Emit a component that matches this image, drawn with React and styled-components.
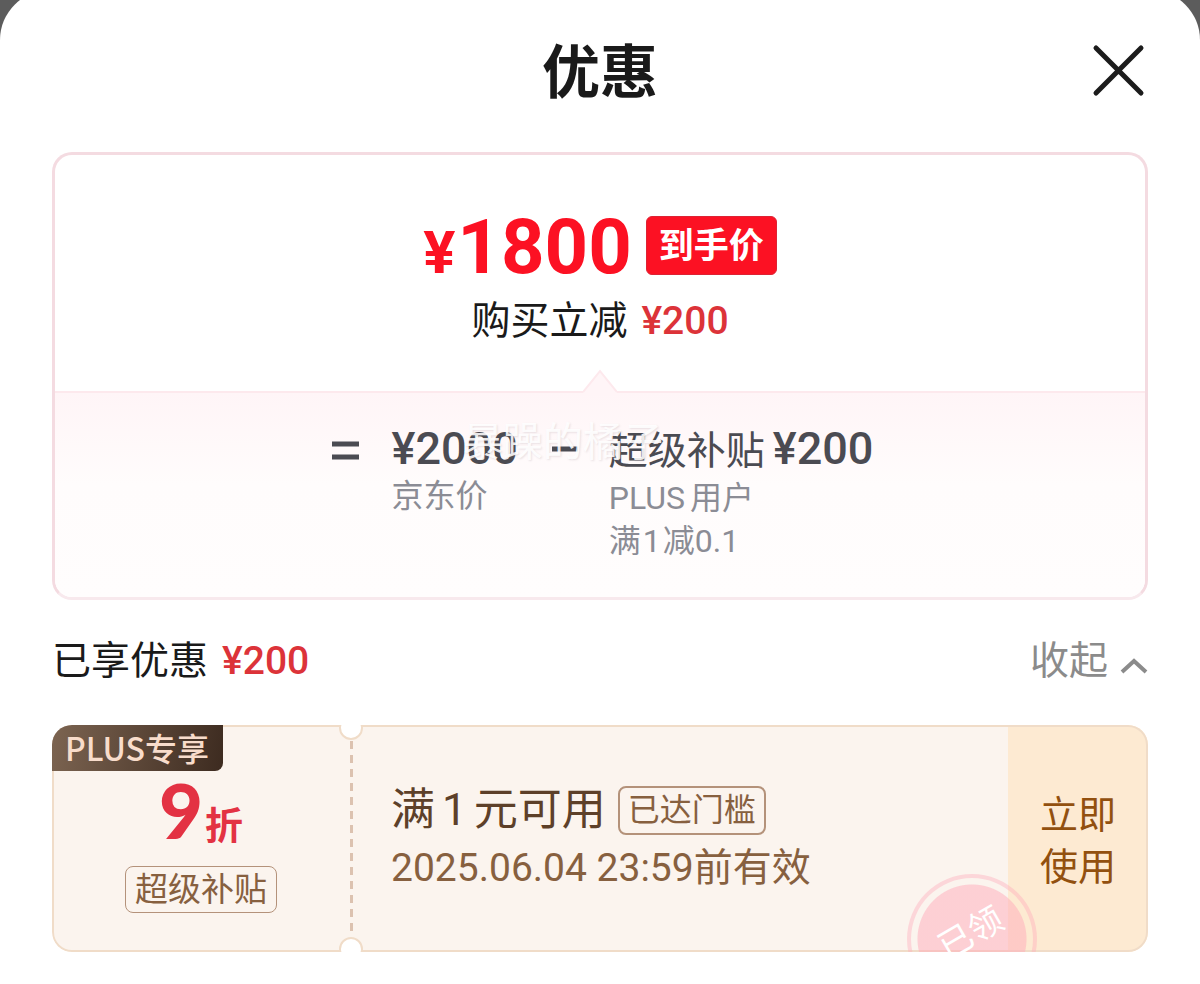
import React from 'react';
import styled, { createGlobalStyle } from 'styled-components';

const GlobalStyle = createGlobalStyle`
    * {
        box-sizing: border-box;
    }

    body {
        margin: 0;
        background: #5c5c5c;
        font-family: Roboto, "Noto Sans CJK SC", sans-serif;
        color: #1a1a1a;
    }

    h1, h2, p {
        margin: 0;
        font-weight: 400;
    }

    button {
        border: none;
        padding: 0;
        background: none;
        font-family: inherit;
        cursor: pointer;
    }
`

// Sheet

const Sheet = styled.main`
    min-height: calc(100vh + 10px);
    margin-top: -10px;
    padding: 10px 52px 32px;
    border-radius: 50px 50px 0 0;
    background: white;
    overflow: hidden;
`

const Header = styled.header`
    display: grid;
    grid-template-columns: 1fr auto 1fr;
    align-items: center;
    padding: 30px 0 38px;
`

const Title = styled.h1`
    grid-column: 2;
    padding-top: 2px;
    font-size: 58px;
    line-height: 82px;

    && {
        font-weight: 700;
    }
`

const CloseButton = styled.button`
    justify-self: end;
    height: 56px;

    svg {
        display: block;
    }
`

const Money = styled.span`
    color: ${props => props.color || '#dc3339'};
    font-size: ${props => props.size || 39}px;
    font-weight: ${props => props.weight || 500};
`

// Price Card

const Card = styled.section`
    border: 3px solid #f4dbe1;
    border-bottom-color: #f8e9ed;
    border-radius: 20px;
    overflow: hidden;
`

const CardTop = styled.div`
    display: flex;
    flex-direction: column;
    align-items: center;
    gap: 18px;
    padding: 60px 0 41px;
`

const PriceRow = styled.div`
    display: flex;
    align-items: center;
    gap: 14px;
    line-height: 64px;
`

const FinalPrice = styled.strong`
    height: 60px;
    color: #fc1123;
    font-size: 76px;
    font-weight: 700;

    small {
        margin-right: 2px;
        font-size: 60px;
    }
`

const PriceTag = styled.span`
    padding: 2px 12px 0;
    border: 1px solid #dd2334;
    border-radius: 6px;
    background: #fc1123;
    color: white;
    font-size: 35px;
    font-weight: 700;
    line-height: 55px;
`

const SaveRow = styled.p`
    display: flex;
    align-items: baseline;
    gap: 14px;
    font-size: 39px;
    line-height: 57px;
`

const CardBottom = styled.div`
    position: relative;
    display: grid;
    grid-template-columns: auto auto auto auto;
    justify-content: center;
    align-items: start;
    padding: 30px 0 34px 5px;
    border-top: 2px solid #fde9ed;
    background: linear-gradient(#fff5f7, #fffcfc 45%, #fffdfd);
    color: #4b4b52;
`

const Pointer = styled.svg`
    position: absolute;
    top: -24px;
    left: 50%;
    margin-left: -17px;
`

const Sign = styled.span`
    width: ${props => props.width}px;
    padding-top: 12px;

    svg {
        display: block;
    }
`

const Part = styled.div`
    margin-right: ${props => props.space || 0}px;
`

const PartValue = styled.p`
    display: flex;
    align-items: baseline;
    gap: 8px;
    font-size: 39px;
    line-height: 52px;
`

const PartNote = styled.p`
    display: flex;
    align-items: baseline;
    gap: ${props => props.gap || 0}px;
    color: #8b8c95;
    font-size: 32px;
    line-height: 43px;
`

const Watermark = styled.span`
    position: absolute;
    top: 24px;
    left: 50%;
    margin-left: -137px;
    color: rgba(255, 255, 255, 0.9);
    font-size: 40px;
    line-height: 52px;
    text-shadow: 1px 1px 2px rgba(120, 100, 110, 0.16);
    pointer-events: none;
`

// Saved Row

const SavedRow = styled.div`
    display: flex;
    justify-content: space-between;
    align-items: center;
    padding: 31px 0 34px;
`

const SavedTitle = styled.h2`
    display: flex;
    align-items: baseline;
    gap: 14px;
    font-size: 39px;
    line-height: 60px;
`

const FoldButton = styled.button`
    display: flex;
    align-items: center;
    gap: 12px;
    color: #8b8b8b;
    font-size: 39px;
    line-height: 60px;

    svg {
        margin-top: 10px;
    }
`

// Coupon

const Coupon = styled.section`
    position: relative;
    display: flex;
    min-height: 227px;
    border-radius: 20px;
    background: #fbf4ee;
    overflow: hidden;

    &::after {
        content: '';
        position: absolute;
        inset: 0;
        border: 2px solid #f0dcc8;
        border-radius: 20px;
        pointer-events: none;
    }
`

const PlusLabel = styled.span`
    position: absolute;
    z-index: 1;
    top: 0;
    left: 0;
    padding: 0 14px 2px 13px;
    border-bottom-right-radius: 8px;
    background: linear-gradient(100deg, #7c6451, #3d2b20);
    color: #f8dccb;
    font-family: "Noto Sans CJK SC", sans-serif;
    font-size: 32px;
    font-weight: 500;
    line-height: 44px;
`

const Discount = styled.div`
    display: flex;
    flex-direction: column;
    align-items: center;
    width: 298px;
    padding-top: 49px;
`

const Rate = styled.p`
    height: 92px;
    color: #e33243;
    font-size: 38px;
    line-height: 72px;

    && {
        font-weight: 700;
    }

    b {
        margin-right: 2px;
        font-family: Lato, sans-serif;
        font-size: 76px;
        font-weight: 900;
    }
`

const Tag = styled.span`
    padding: 0 ${props => props.pad}px;
    border: ${props => props.thick || 1}px solid #b4927a;
    border-radius: 8px;
    color: #87603f;
    font-size: ${props => props.size}px;
    line-height: 45px;
`

const Divider = styled.div`
    width: 3px;
    margin: 16px 0;
    background: repeating-linear-gradient(#dcc2b0 0 8px, transparent 8px 14px);
`

const Notch = styled.i`
    position: absolute;
    z-index: 1;
    left: 287px;
    ${props => props.side}: -9px;
    width: 24px;
    height: 24px;
    border: 2px solid #f0dcc8;
    border-radius: 50%;
    background: white;
`

const Details = styled.div`
    flex: 1;
    padding: 56px 0 0 38px;
`

const Condition = styled.div`
    display: flex;
    align-items: center;
    gap: 12px;
    color: #5d4029;
    font-size: 44px;
    line-height: 58px;
`

const Count = styled.span`
    margin: 0 7px;
`

const Expiry = styled.p`
    color: #87603f;
    font-size: 39px;
    line-height: 58px;
`

const UseButton = styled.button`
    width: 140px;
    padding-top: 4px;
    background: #fdead2;
    color: #92500f;
    font-size: 38px;
    line-height: 52px;

    span {
        display: block;
    }
`

const Stamp = styled.span`
    position: absolute;
    z-index: 1;
    right: 111px;
    bottom: -52px;
    display: grid;
    place-items: center;
    width: 130px;
    height: 130px;
    border: 4px solid rgba(255, 170, 185, 0.4);
    border-radius: 50%;
    background: radial-gradient(circle, rgba(255, 170, 185, 0.5) 54px, transparent 55px);
    color: white;
    font-size: 34px;
    line-height: 40px;
    pointer-events: none;

    span {
        padding: 0 0 12px 4px;
        transform: rotate(-30deg);
    }
`

const App = () => {
    return (
        <>
            <GlobalStyle />
            <Sheet>
                <Header>
                    <Title>优惠</Title>
                    <CloseButton aria-label="关闭">
                        <svg width="58" height="56" viewBox="0 0 58 56" fill="none" stroke="#1c1c1c" strokeWidth="5" strokeLinecap="round">
                            <path d="M6 4L51 49M51 4L6 49" />
                        </svg>
                    </CloseButton>
                </Header>

                <Card>
                    <CardTop>
                        <PriceRow>
                            <FinalPrice><small>¥</small>1800</FinalPrice>
                            <PriceTag>到手价</PriceTag>
                        </PriceRow>
                        <SaveRow>购买立减 <Money>¥200</Money></SaveRow>
                    </CardTop>
                    <CardBottom>
                        <Pointer width="34" height="26" viewBox="0 0 34 26">
                            <path d="M0 26V23L17 2L34 23V26Z" fill="#fff5f7" />
                            <path d="M0 23L17 2L34 23" fill="none" stroke="#fde9ed" strokeWidth="2" />
                        </Pointer>
                        <Sign width={60}>
                            <svg width="27" height="34" viewBox="0 0 27 34" stroke="#4b4b52" strokeWidth="5">
                                <path d="M0 9H27M0 22H27" />
                            </svg>
                        </Sign>
                        <Part space={34}>
                            <PartValue><Money size={45} color="#4b4b52">¥2000</Money></PartValue>
                            <PartNote>京东价</PartNote>
                        </Part>
                        <Sign width={57}>
                            <svg width="26" height="34" viewBox="0 0 26 34" stroke="#4b4b52" strokeWidth="5">
                                <path d="M0 14H26" />
                            </svg>
                        </Sign>
                        <Part>
                            <PartValue>超级补贴 <Money size={45} color="#4b4b52">¥200</Money></PartValue>
                            <PartNote gap={5}>
                                <span>PLUS</span>
                                <span>用户</span>
                            </PartNote>
                            <PartNote gap={2}>
                                <span>满</span>
                                <span>1</span>
                                <span>减0.1</span>
                            </PartNote>
                        </Part>
                        <Watermark>暴躁的橘子</Watermark>
                    </CardBottom>
                </Card>

                <SavedRow>
                    <SavedTitle>已享优惠 <Money>¥200</Money></SavedTitle>
                    <FoldButton>
                        收起
                        <svg width="28" height="18" viewBox="0 0 28 18" fill="none" stroke="#8b8b8b" strokeWidth="4">
                            <path d="M2 15L14 4L26 15" />
                        </svg>
                    </FoldButton>
                </SavedRow>

                <Coupon>
                    <PlusLabel>PLUS专享</PlusLabel>
                    <Discount>
                        <Rate><b>9</b>折</Rate>
                        <Tag size={33} pad={9}>超级补贴</Tag>
                    </Discount>
                    <Divider />
                    <Notch side="top" />
                    <Notch side="bottom" />
                    <Details>
                        <Condition>
                            <span>满<Count>1</Count>元可用</span>
                            <Tag size={32} pad={8} thick={2}>已达门槛</Tag>
                        </Condition>
                        <Expiry>2025.06.04 23:59前有效</Expiry>
                    </Details>
                    <UseButton>
                        <span>立即</span>
                        <span>使用</span>
                    </UseButton>
                    <Stamp><span>已领</span></Stamp>
                </Coupon>
            </Sheet>
        </>
    )
}

export default App;
